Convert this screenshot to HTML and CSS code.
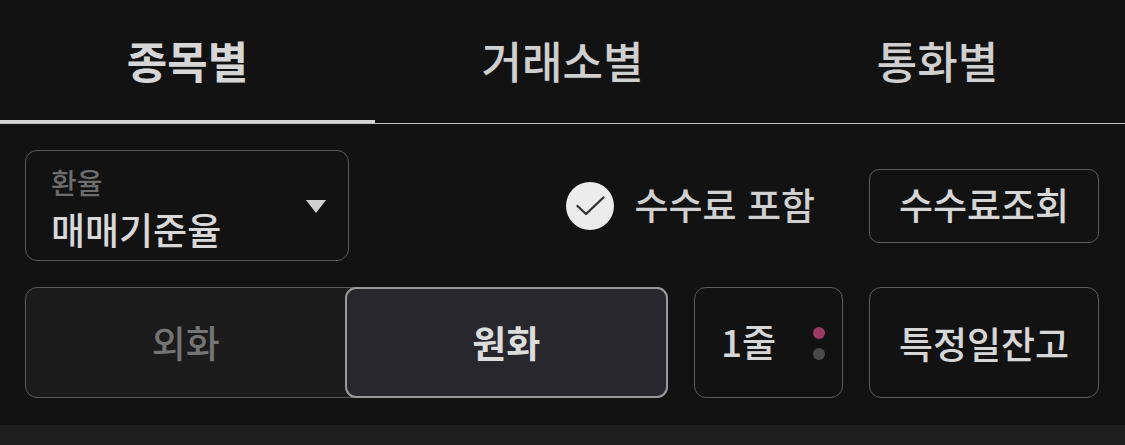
FILE: index.html
```html
<!DOCTYPE html>
<html lang="ko">
<head>
    <meta charset="UTF-8">
    <meta name="viewport" content="width=device-width, initial-scale=1.0">
    <title>잔고</title>
    <link rel="stylesheet" href="styles.css">
</head>
<body>

<div class="tabs">
    <div class="tab active">종목별</div>
    <div class="tab">거래소별</div>
    <div class="tab">통화별</div>
</div>

<div class="controls">
    <div class="row">
        <div class="select-box">
            <div class="select-text">
                <span class="select-label">환율</span>
                <span class="select-value">매매기준율</span>
            </div>
            <span class="caret"></span>
        </div>
        <label class="check">
            <span class="check-circle">
                <svg width="48" height="48" viewBox="0 0 48 48">
                    <path d="M11.5 24 L20 32 L37.5 15.5" fill="none" stroke="#333" stroke-width="2.4" stroke-linecap="round" stroke-linejoin="round"/>
                </svg>
            </span>
            <span class="check-text">수수료 포함</span>
        </label>
        <button class="btn btn-fee">수수료조회</button>
    </div>

    <div class="row">
        <div class="segment">
            <button class="seg">외화</button>
            <button class="seg selected">원화</button>
        </div>
        <button class="btn btn-lines">
            <span>1줄</span>
            <span class="dots"><i class="dot on"></i><i class="dot"></i></span>
        </button>
        <button class="btn btn-date">특정일잔고</button>
    </div>
</div>

<div class="footer-strip"></div>

</body>
</html>
```

FILE: styles.css
```css
body {
    margin: 0;
    background: #121212;
    color: #d2d2d2;
    font-family: "Noto Sans CJK KR", "Noto Sans", sans-serif;
    height: 445px;
    overflow: hidden;
}
.tabs {
    display: flex;
    border-bottom: 1px solid #bdbdbd;
}
.tab {
    flex: 1;
    height: 123px;
    display: flex;
    align-items: center;
    justify-content: center;
    font-size: 44px;
    font-weight: 500;
    color: #cfcfcf;
    padding-bottom: 4px;
    box-sizing: border-box;
}
.tab.active {
    font-weight: 700;
    color: #d6d6d6;
    box-shadow: inset 0 -3px 0 #d4d4d4;
}
.controls {
    padding: 26px 26px 0 25px;
    display: flex;
    flex-direction: column;
    gap: 26px;
}
.row {
    display: flex;
    align-items: center;
    height: 111px;
}
.select-box {
    width: 324px;
    height: 111px;
    box-sizing: border-box;
    border: 1px solid #5a5a5a;
    border-radius: 12px;
    display: flex;
    align-items: center;
    padding: 0 22px 0 25px;
}
.select-text {
    flex: 1;
    display: flex;
    flex-direction: column;
    gap: 4px;
    padding-top: 2px;
}
.select-label {
    font-size: 28px;
    line-height: 40px;
    font-weight: 500;
    color: #6d6d6d;
}
.select-value {
    font-size: 37px;
    line-height: 46px;
    font-weight: 500;
    color: #d8d8d8;
}
.caret {
    width: 0;
    height: 0;
    border-left: 10px solid transparent;
    border-right: 10px solid transparent;
    border-top: 13px solid #cfcfcf;
    margin-top: 2px;
}
.check {
    margin-left: auto;
    display: flex;
    align-items: center;
    gap: 20px;
    margin-right: 54px;
}
.check-circle {
    width: 48px;
    height: 48px;
    border-radius: 50%;
    background: #ececec;
    display: flex;
}
.check-text {
    font-size: 37px;
    font-weight: 500;
    color: #d0d0d0;
    padding-bottom: 3px;
}
.btn {
    background: transparent;
    border: 1px solid #5c5c5c;
    border-radius: 12px;
    color: #d6d6d6;
    font-family: inherit;
    font-size: 37px;
    font-weight: 500;
    padding: 0;
    box-sizing: border-box;
    display: flex;
    align-items: center;
    justify-content: center;
}
.btn-fee {
    width: 230px;
    height: 74px;
    border-radius: 10px;
    padding-bottom: 3px;
}
.segment {
    display: flex;
    width: 643px;
    height: 111px;
    border: 1px solid #5a5a5a;
    border-radius: 12px;
    background: #1b1b1b;
    box-sizing: border-box;
}
.seg {
    flex: 1;
    background: transparent;
    border: none;
    font-family: inherit;
    font-size: 37px;
    color: #747474;
    font-weight: 500;
    border-radius: 11px;
    padding-bottom: 3px;
}
.seg.selected {
    background: #27272d;
    border: 2px solid #9a9a9a;
    margin: -1px;
    color: #dcdcdc;
    font-weight: 700;
}
.btn-lines {
    width: 149px;
    height: 111px;
    margin-left: 26px;
    justify-content: space-between;
    padding: 0 17px 3px 26px;
}
.dots {
    display: flex;
    flex-direction: column;
    gap: 9px;
    padding-top: 4px;
}
.dot {
    width: 12px;
    height: 12px;
    border-radius: 50%;
    background: #4a4a4a;
}
.dot.on {
    background: #9b3b63;
}
.btn-date {
    width: 230px;
    height: 111px;
    margin-left: 26px;
}
.footer-strip {
    margin-top: 27px;
    height: 20px;
    background: #1e1e1e;
}
```
